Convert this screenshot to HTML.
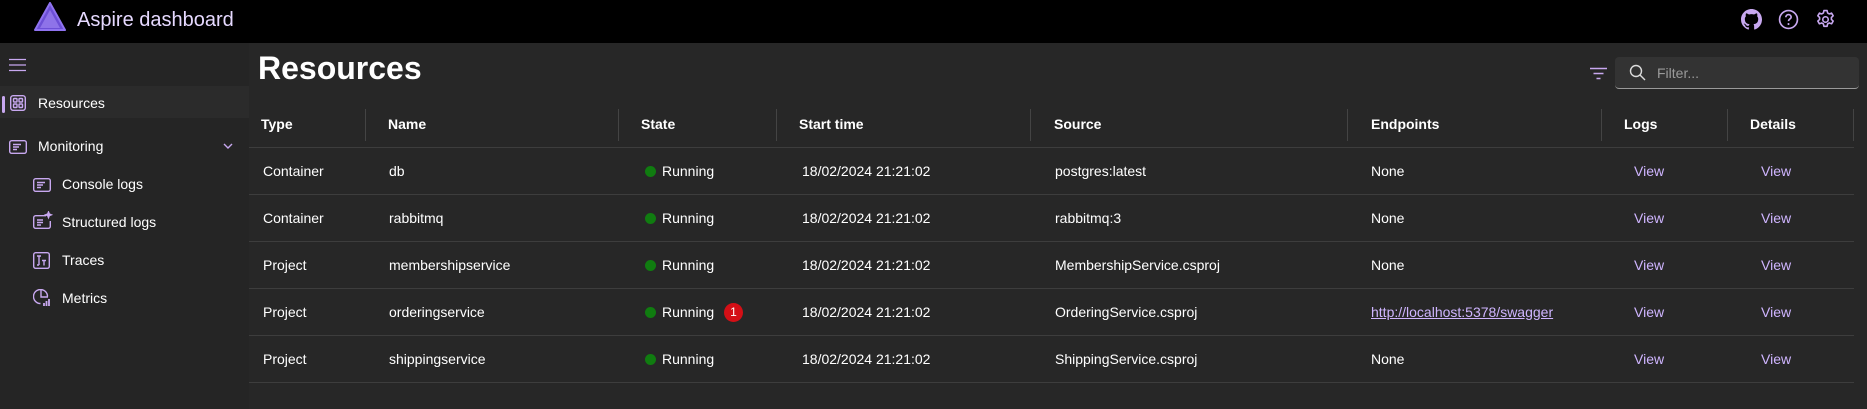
<!DOCTYPE html>
<html><head><meta charset="utf-8"><style>
*{margin:0;padding:0;box-sizing:border-box}
body{width:1867px;height:409px;overflow:hidden;background:#272727;font-family:"Liberation Sans",sans-serif;color:#fff;font-size:14px;position:relative}
.top{position:absolute;left:0;top:0;width:1867px;height:43px;background:#000}
.brand{position:absolute;left:77px;top:9px;font-size:20px;color:#e6d9ff}
.side{position:absolute;left:0;top:43px;width:249px;height:366px;background:#252525}
.abs{position:absolute}
.nav{position:absolute;font-size:14px;color:#fff}
.ic{position:absolute;stroke:#c8a8f0;fill:none;stroke-width:1.4}
.th{position:absolute;top:116px;font-weight:bold;font-size:14px}
.vs{position:absolute;top:109px;width:1px;height:32px;background:#444}
.hl{position:absolute;left:249px;width:1605px;height:1px;background:#3d3d3d}
.c{position:absolute;font-size:14px}
.v{color:#cfb5ff}
.dot{position:absolute;width:11px;height:11px;border-radius:50%;background:#107c10}
</style></head><body>
<div class="top"></div>
<svg class="abs" style="left:34px;top:2px" width="32" height="30" viewBox="0 0 32 30"><polygon points="16,1 31,28 1,28" fill="#6c4fd6" stroke="#8f73f0" stroke-width="2" stroke-linejoin="round"/><polygon points="16,8 26,26 6,26" fill="#a58cf5" opacity=".6"/></svg>
<div class="brand">Aspire dashboard</div>
<svg class="abs" style="left:1741px;top:9px" width="21" height="21" viewBox="0 0 16 16"><path fill="#c8a8f0" d="M8 0C3.58 0 0 3.58 0 8c0 3.54 2.29 6.53 5.47 7.59.4.07.55-.17.55-.38v-1.33c-2.23.48-2.7-1.07-2.7-1.07-.36-.92-.89-1.17-.89-1.17-.73-.5.05-.49.05-.49.8.06 1.23.83 1.23.83.72 1.23 1.88.87 2.34.67.07-.52.28-.87.51-1.07-1.78-.2-3.64-.89-3.64-3.95 0-.87.31-1.59.82-2.15-.08-.2-.36-1.02.08-2.12 0 0 .67-.21 2.2.82a7.6 7.6 0 014 0c1.53-1.04 2.2-.82 2.2-.82.44 1.1.16 1.92.08 2.12.51.56.82 1.27.82 2.15 0 3.07-1.87 3.75-3.65 3.95.29.25.54.73.54 1.48v2.2c0 .21.15.46.55.38A8 8 0 0016 8c0-4.42-3.58-8-8-8z"/></svg>
<svg class="abs" style="left:1778px;top:9px" width="21" height="21" viewBox="0 0 20 20"><circle cx="10" cy="10" r="8.5" stroke="#c8a8f0" stroke-width="1.6" fill="none"/><path d="M7.5 7.8a2.5 2.5 0 115 0c0 1.6-2.5 1.8-2.5 3.7" stroke="#c8a8f0" stroke-width="1.6" fill="none"/><circle cx="10" cy="14.3" r="1" fill="#c8a8f0"/></svg>
<svg class="abs" style="left:1815px;top:9px" width="21" height="21" viewBox="0 0 20 20"><path d="M8.5 1.5h3l.5 2.3 1.6.9 2.2-.8 1.5 2.6-1.7 1.6v1.8l1.7 1.6-1.5 2.6-2.2-.8-1.6.9-.5 2.3h-3l-.5-2.3-1.6-.9-2.2.8-1.5-2.6 1.7-1.6V8.1L2.7 6.5l1.5-2.6 2.2.8 1.6-.9z" stroke="#c8a8f0" stroke-width="1.5" fill="none" stroke-linejoin="round"/><circle cx="10" cy="10" r="2.6" stroke="#c8a8f0" stroke-width="1.5" fill="none"/></svg>

<div class="side">
<svg class="abs" style="left:9px;top:15px" width="18" height="14"><path d="M0 1.5h17M0 7h17M0 12.5h17" stroke="#c8a8f0" stroke-width="1.3"/></svg>
<div class="abs" style="left:0;top:43px;width:249px;height:32px;background:#2b2b2b"></div>
<div class="abs" style="left:2px;top:53px;width:3px;height:17px;border-radius:2px;background:#c8a8f0"></div>
</div>
<svg class="ic" style="left:10px;top:95px" width="16" height="16" viewBox="0 0 16 16"><rect x=".7" y=".7" width="14.6" height="14.6" rx="2.5"/><rect x="3.5" y="3.5" width="3.5" height="3.5" rx=".8"/><rect x="9" y="3.5" width="3.5" height="3.5" rx=".8"/><rect x="3.5" y="9" width="3.5" height="3.5" rx=".8"/><rect x="9" y="9" width="3.5" height="3.5" rx=".8"/></svg>
<div class="nav" style="left:38px;top:95px">Resources</div>
<svg class="ic" style="left:9px;top:140px" width="18" height="14" viewBox="0 0 18 14"><rect x=".7" y=".7" width="16.6" height="12.6" rx="2"/><path d="M4 4.5h8M4 7h6M4 9.5h4"/></svg>
<div class="nav" style="left:38px;top:138px">Monitoring</div>
<svg class="ic" style="left:223px;top:143px" width="10" height="6"><path d="M1 1l4 4 4-4"/></svg>
<svg class="ic" style="left:33px;top:178px" width="18" height="14" viewBox="0 0 18 14"><rect x=".7" y=".7" width="16.6" height="12.6" rx="2"/><path d="M4 4.5h8M4 7h6M4 9.5h4"/></svg>
<div class="nav" style="left:62px;top:176px">Console logs</div>
<svg class="ic" style="left:33px;top:211px" width="20" height="18" viewBox="0 0 20 18"><path d="M13 4.7H2.7a2 2 0 00-2 2v8.6a2 2 0 002 2h12.6a2 2 0 002-2V10"/><path d="M4 9h6M4 11.5h6M4 14h4"/><path d="M15.5 1l.8 2 2 .8-2 .8-.8 2-.8-2-2-.8 2-.8z" fill="#c8a8f0"/></svg>
<div class="nav" style="left:62px;top:214px">Structured logs</div>
<svg class="ic" style="left:33px;top:252px" width="17" height="17" viewBox="0 0 17 17"><rect x=".7" y=".7" width="15.6" height="15.6" rx="2"/><path d="M4 4h4M6 4v9M9 8.5h4M11 8.5v5M4 13h2"/></svg>
<div class="nav" style="left:62px;top:252px">Traces</div>
<svg class="ic" style="left:33px;top:289px" width="18" height="18" viewBox="0 0 18 18"><path d="M14.5 7.5A7 7 0 107.5 14.5"/><path d="M8 1v7h7"/><path d="M11 17v-3M13.5 17v-5M16 17v-7" stroke-width="1.8"/></svg>
<div class="nav" style="left:62px;top:290px">Metrics</div>

<div class="abs" style="left:258px;top:50px;font-size:32px;font-weight:bold">Resources</div>
<svg class="ic" style="left:1590px;top:67px" width="17" height="13"><path d="M0 1.5h17M3.5 6.5h10M6.5 11.5h4" stroke-width="1.5"/></svg>
<div class="abs" style="left:1615px;top:57px;width:244px;height:32px;background:#333;border-radius:4px;border-bottom:1px solid #9a9a9a"></div>
<svg class="abs" style="left:1629px;top:64px" width="17" height="17"><circle cx="7" cy="7" r="5.5" stroke="#ddd" stroke-width="1.4" fill="none"/><path d="M11 11l5 5" stroke="#ddd" stroke-width="1.4"/></svg>
<div class="abs" style="left:1657px;top:65px;color:#9a9a9a;font-size:14px">Filter...</div>

<div class="th" style="left:261px">Type</div>
<div class="th" style="left:388px">Name</div>
<div class="th" style="left:641px">State</div>
<div class="th" style="left:799px">Start time</div>
<div class="th" style="left:1054px">Source</div>
<div class="th" style="left:1371px">Endpoints</div>
<div class="th" style="left:1624px">Logs</div>
<div class="th" style="left:1750px">Details</div>
<div class="vs" style="left:365px"></div><div class="vs" style="left:618px"></div><div class="vs" style="left:776px"></div><div class="vs" style="left:1030px"></div><div class="vs" style="left:1347px"></div><div class="vs" style="left:1601px"></div><div class="vs" style="left:1727px"></div><div class="vs" style="left:1853px"></div>
<div class="hl" style="top:147px"></div><div class="hl" style="top:194px"></div><div class="hl" style="top:241px"></div><div class="hl" style="top:288px"></div><div class="hl" style="top:335px"></div><div class="hl" style="top:382px"></div>

<div class="c" style="left:263px;top:163px">Container</div><div class="c" style="left:389px;top:163px">db</div><div class="dot" style="left:645px;top:166px"></div><div class="c" style="left:662px;top:163px">Running</div><div class="c" style="left:802px;top:163px">18/02/2024 21:21:02</div><div class="c" style="left:1055px;top:163px">postgres:latest</div><div class="c" style="left:1371px;top:163px">None</div><div class="c v" style="left:1634px;top:163px">View</div><div class="c v" style="left:1761px;top:163px">View</div>

<div class="c" style="left:263px;top:210px">Container</div><div class="c" style="left:389px;top:210px">rabbitmq</div><div class="dot" style="left:645px;top:213px"></div><div class="c" style="left:662px;top:210px">Running</div><div class="c" style="left:802px;top:210px">18/02/2024 21:21:02</div><div class="c" style="left:1055px;top:210px">rabbitmq:3</div><div class="c" style="left:1371px;top:210px">None</div><div class="c v" style="left:1634px;top:210px">View</div><div class="c v" style="left:1761px;top:210px">View</div>

<div class="c" style="left:263px;top:257px">Project</div><div class="c" style="left:389px;top:257px">membershipservice</div><div class="dot" style="left:645px;top:260px"></div><div class="c" style="left:662px;top:257px">Running</div><div class="c" style="left:802px;top:257px">18/02/2024 21:21:02</div><div class="c" style="left:1055px;top:257px">MembershipService.csproj</div><div class="c" style="left:1371px;top:257px">None</div><div class="c v" style="left:1634px;top:257px">View</div><div class="c v" style="left:1761px;top:257px">View</div>

<div class="c" style="left:263px;top:304px">Project</div><div class="c" style="left:389px;top:304px">orderingservice</div><div class="dot" style="left:645px;top:307px"></div><div class="c" style="left:662px;top:304px">Running</div><div class="abs" style="left:724px;top:303px;width:19px;height:19px;border-radius:50%;background:#d40f16;color:#fff;font-size:12px;text-align:center;line-height:19px">1</div><div class="c" style="left:802px;top:304px">18/02/2024 21:21:02</div><div class="c" style="left:1055px;top:304px">OrderingService.csproj</div><div class="c v" style="left:1371px;top:304px;text-decoration:underline">http://localhost:5378/swagger</div><div class="c v" style="left:1634px;top:304px">View</div><div class="c v" style="left:1761px;top:304px">View</div>

<div class="c" style="left:263px;top:351px">Project</div><div class="c" style="left:389px;top:351px">shippingservice</div><div class="dot" style="left:645px;top:354px"></div><div class="c" style="left:662px;top:351px">Running</div><div class="c" style="left:802px;top:351px">18/02/2024 21:21:02</div><div class="c" style="left:1055px;top:351px">ShippingService.csproj</div><div class="c" style="left:1371px;top:351px">None</div><div class="c v" style="left:1634px;top:351px">View</div><div class="c v" style="left:1761px;top:351px">View</div>
</body></html>
